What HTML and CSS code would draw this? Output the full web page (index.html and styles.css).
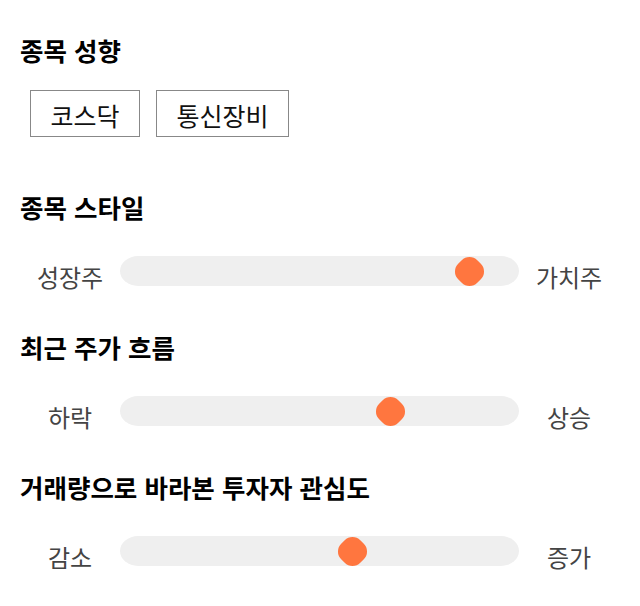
FILE: index.html
```html
<!DOCTYPE html>
<html lang="ko">
<head>
<meta charset="utf-8">
<link rel="stylesheet" href="styles.css">
</head>
<body>
<div class="page">
  <section class="section">
    <h2 class="title">종목 성향</h2>
    <div class="tags">
      <span class="tag">코스닥</span>
      <span class="tag">통신장비</span>
    </div>
  </section>
  <section class="section">
    <h2 class="title">종목 스타일</h2>
    <div class="slider-row">
      <span class="label">성장주</span>
      <div class="track"><span class="thumb" style="left:87.7%"></span></div>
      <span class="label">가치주</span>
    </div>
  </section>
  <section class="section">
    <h2 class="title">최근 주가 흐름</h2>
    <div class="slider-row">
      <span class="label">하락</span>
      <div class="track"><span class="thumb" style="left:67.7%"></span></div>
      <span class="label">상승</span>
    </div>
  </section>
  <section class="section">
    <h2 class="title">거래량으로 바라본 투자자 관심도</h2>
    <div class="slider-row">
      <span class="label">감소</span>
      <div class="track"><span class="thumb" style="left:58.2%"></span></div>
      <span class="label">증가</span>
    </div>
  </section>
</div>
</body>
</html>
```
FILE: styles.css
```css
html, body {
  margin: 0;
  padding: 0;
  background: #ffffff;
}
body {
  font-family: "Noto Sans CJK KR", "Noto Sans", sans-serif;
  color: #111;
}
.page {
  padding: 32px 20px 0 20px;
  display: flex;
  flex-direction: column;
}
.section {
  display: flex;
  flex-direction: column;
}
.section + .section {
  margin-top: 37px;
}
.section:nth-child(2) {
  margin-top: 52px;
}
.title {
  margin: 0;
  font-size: 25.5px;
  font-weight: 700;
  line-height: 36px;
  color: #000;
}
.tags {
  display: flex;
  gap: 16px;
  margin: 22px 0 0 10px;
}
.tag {
  border: 1px solid #888;
  font-size: 25px;
  line-height: 33px;
  padding: 8px 19.5px 4px 19.5px;
  color: #111;
}
.slider-row {
  display: flex;
  align-items: flex-start;
  margin: 31px 0 0 10px;
  gap: 10px;
}
.label {
  width: 80px;
  text-align: center;
  font-size: 24px;
  line-height: 30px;
  margin-top: 6px;
  color: #444;
}
.track {
  position: relative;
  width: 399px;
  height: 30px;
  background: #efefef;
  border-radius: 18px / 15px;
}
.thumb {
  position: absolute;
  top: 50%;
  width: 27px;
  height: 27px;
  margin: -13.5px 0 0 -13.5px;
  background: #ff763f;
  border-radius: 11px;
  transform: rotate(45deg);
}
```
